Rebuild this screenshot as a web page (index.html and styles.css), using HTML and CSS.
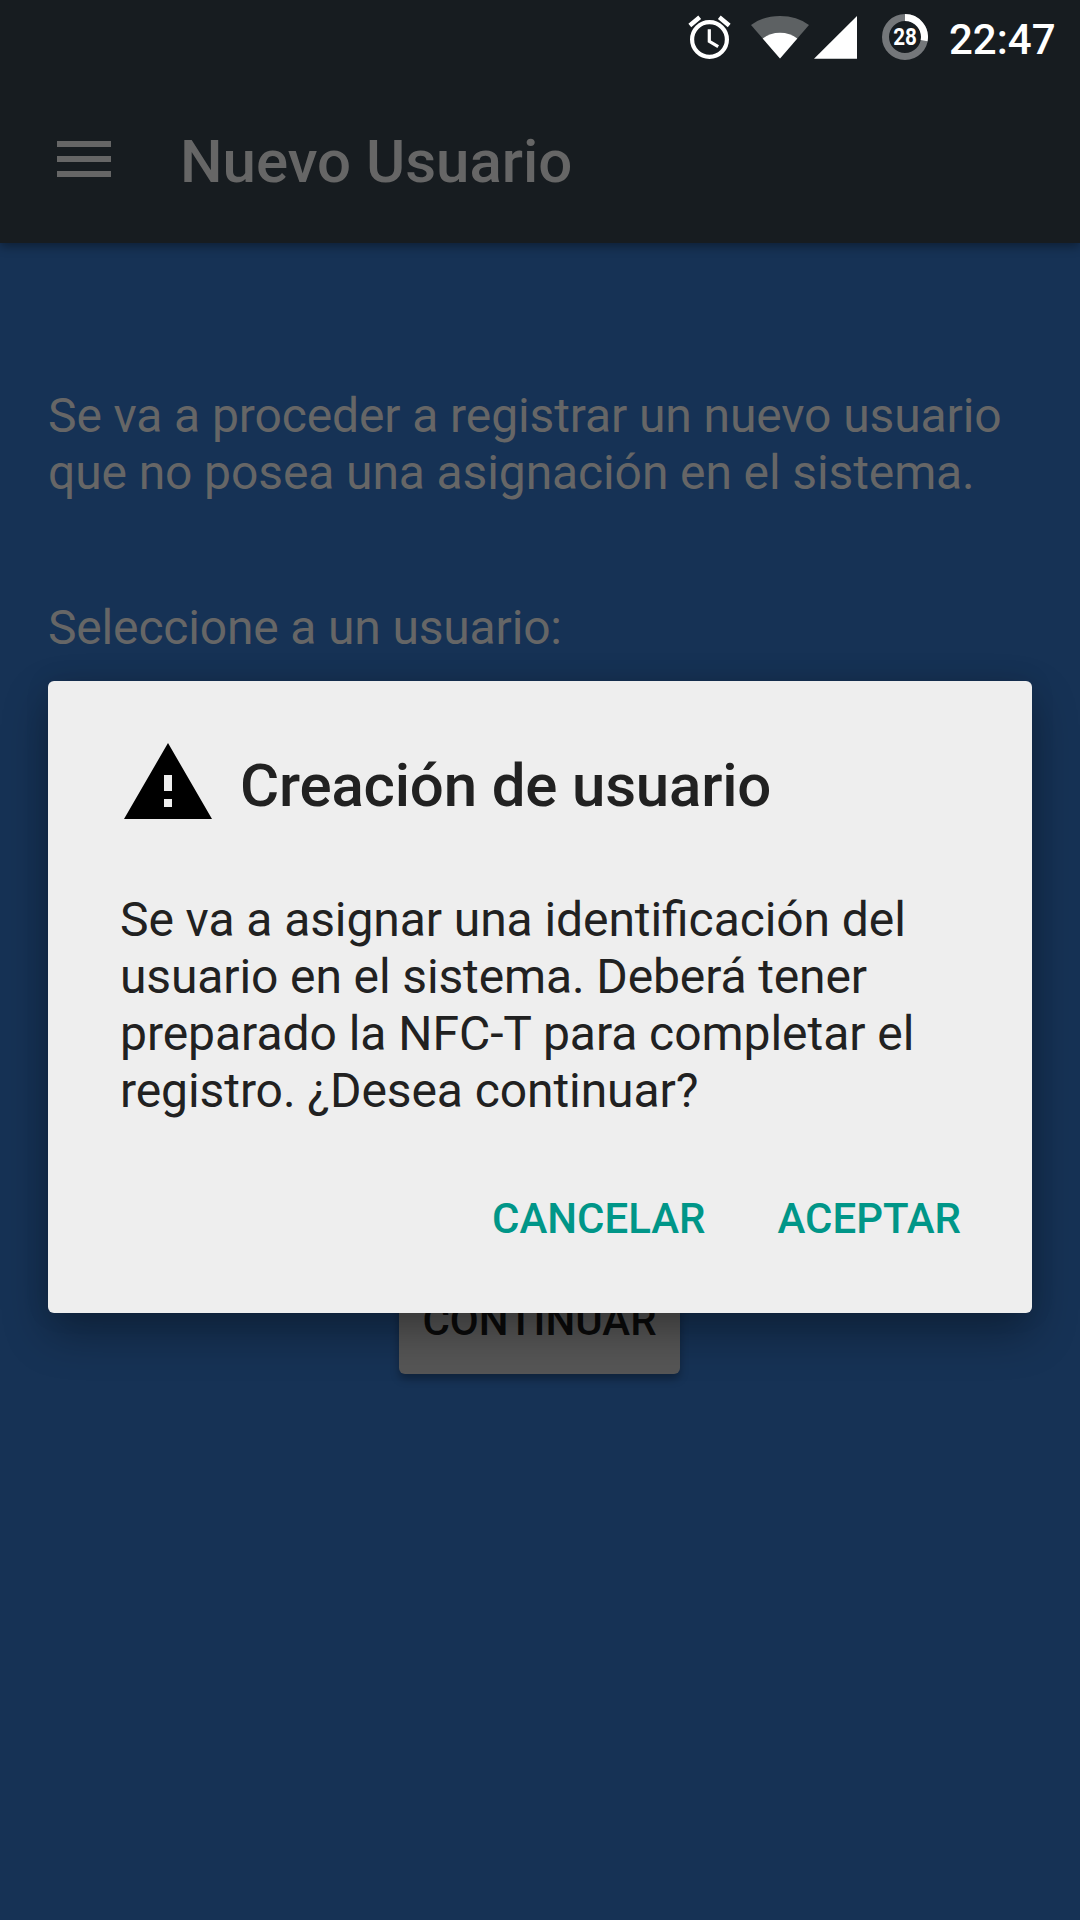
FILE: index.html
```html
<!DOCTYPE html>
<html lang="es">
<head>
<meta charset="utf-8">
<title>Nuevo Usuario</title>
<link rel="stylesheet" href="styles.css">
</head>
<body>
<div class="screen">
  <header class="header">
    <div class="status">
      <svg class="alarm" width="44" height="46" viewBox="0 0 44 46" fill="none" stroke="#fff">
        <circle cx="22.500" cy="25.5" r="17.4" stroke-width="4.2"/>
        <path d="M22.300 15.200V27.300L31.200 32.600" stroke-width="3.200"/>
        <path d="M2.800 11.500L12.700 3.200M42.200 11.500L32.300 3.200" stroke-width="4.400"/>
      </svg>
      <svg class="wifi" width="60" height="44" viewBox="0 0 60 44">
        <path d="M30 43.500L1 10Q13 1 30 1T59 10Z" fill="#5d6163"/>
        <path d="M30 43.500L12.700 23.500Q20 17.800 30 17.800T47.300 23.500Z" fill="#fff"/>
      </svg>
      <svg class="cell" width="43" height="43" viewBox="0 0 43 43">
        <path d="M43 0V42.700H0Z" fill="#fff"/>
      </svg>
      <div class="battery">
        <svg width="46" height="46" viewBox="0 0 46 46" fill="none" stroke-width="7">
          <circle cx="23" cy="23" r="19.500" stroke="#74777a"/>
          <path d="M23 3.500A19.500 19.500 0 0 1 42.100 26.700" stroke="#fff"/>
        </svg>
        <span class="level">28</span>
      </div>
      <span class="clock">22:47</span>
    </div>
    <div class="toolbar">
      <div class="menu"><i></i><i></i><i></i></div>
      <h1 class="title">Nuevo Usuario</h1>
    </div>
  </header>
  <main class="content">
    <p class="intro">Se va a proceder a registrar un nuevo usuario que no posea una asignación en el sistema.</p>
    <p class="prompt">Seleccione a un usuario:</p>
    <button class="continue">CONTINUAR</button>
  </main>
  <section class="dialog" role="dialog">
    <div class="dialog-head">
      <svg width="96" height="96" viewBox="0 0 24 24"><path d="M1 21h22L12 2 1 21zm12-3h-2v-2h2v2zm0-4h-2v-4h2v4z"/></svg>
      <h2 class="dialog-title">Creación de usuario</h2>
    </div>
    <p class="message">Se va a asignar una identificación del <span class="tight">usuario en el sistema. Deberá tener</span> <span class="loose">preparado la NFC-T para completar el</span> registro. ¿Desea continuar?</p>
    <div class="actions">
      <button class="action">CANCELAR</button>
      <button class="action">ACEPTAR</button>
    </div>
  </section>
</div>
</body>
</html>
```
FILE: styles.css
```css
* { box-sizing: border-box; margin: 0; padding: 0; }
body { font-family: Roboto, sans-serif; background: #163255; }
button { font-family: inherit; border: 0; background: none; }
.screen { position: relative; width: 1080px; height: 1920px; overflow: hidden; background: #163255; }

.header { height: 243px; background: #171c20; box-shadow: 0 3px 10px rgba(0, 0, 0, .4); }
.status { display: flex; align-items: flex-start; height: 75px; padding-left: 687px; color: #fff; }
.alarm { margin-top: 14px; }
.wifi { margin: 15px 0 0 19px; }
.cell { margin: 16px 0 0 4px; }
.battery { position: relative; width: 46px; height: 46px; margin: 14px 0 0 25px; }
.battery svg { display: block; }
.level { position: absolute; inset: 0; font: 700 24px/46px Roboto, sans-serif; text-align: center; transform: scaleX(.86); }
.clock { margin: 15px 0 0 21px; font-size: 42px; font-weight: 500; line-height: 50px; }
.toolbar { display: flex; align-items: center; height: 168px; padding-left: 57px; }
.menu { display: grid; gap: 9px; width: 54px; }
.menu i { height: 6px; background: #666; }
.title { margin: 6px 0 0 69px; font-size: 60px; font-weight: 500; line-height: 70px; color: #666; }

.content { display: flex; flex-direction: column; padding: 144px 48px 0; font-size: 48px; line-height: 57px; color: #666; }
.intro { letter-spacing: -.11px; }
.prompt { margin-top: 98px; letter-spacing: -.17px; }
.continue { align-self: center; width: 281px; height: 108px; margin: 610px 1px 0 0; border-radius: 6px; background: #565656; color: #0b0b0b; font-size: 42px; font-weight: 500; box-shadow: 0 5px 8px rgba(0, 0, 0, .3); }

.dialog { position: absolute; left: 48px; top: 681px; width: 984px; height: 632px; padding: 54px 72px 0; border-radius: 6px; background: #eee; color: #212121; box-shadow: 0 20px 46px rgba(0, 0, 0, .32), 0 0 24px rgba(0, 0, 0, .1); }
.dialog-head { display: flex; align-items: center; gap: 24px; }
.dialog-title { margin-top: 5px; font-size: 60px; font-weight: 500; line-height: 70px; letter-spacing: -.18px; }
.message { margin-top: 60px; font-size: 48px; line-height: 57px; letter-spacing: -.08px; font-feature-settings: "liga" 1; }
.tight { letter-spacing: -.12px; }
.loose { letter-spacing: -.04px; }
.actions { display: flex; justify-content: flex-end; gap: 72px; margin: 75px -1px 0 0; }
.action { color: #009688; font-size: 42px; font-weight: 500; line-height: 50px; }
```
